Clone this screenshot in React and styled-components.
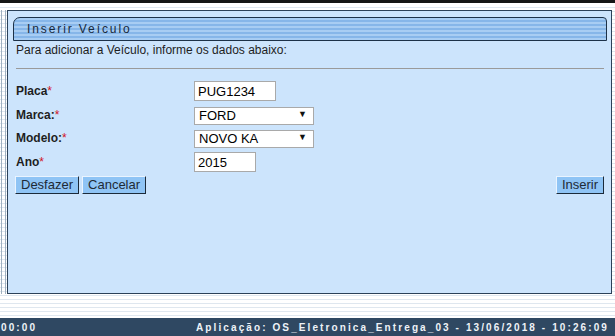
import React from 'react'
import styled, { createGlobalStyle } from 'styled-components'

const GlobalStyle = createGlobalStyle`
  html, body {
    margin: 0;
    padding: 0;
  }
  body {
    font-family: "Liberation Sans", Arial, sans-serif;
    background: #fff;
  }
`;

const Page = styled.div`
  width: 615px;
  height: 336px;
  display: flex;
  flex-direction: column;
  overflow: hidden;
  background: repeating-linear-gradient(
    to bottom,
    #ffffff 0px,
    #ffffff 3px,
    #dfe7ef 3px,
    #dfe7ef 4px
  );
`;

const TopBar = styled.div`
  height: 3px;
  background: #161616;
  border-bottom: 1px solid #ffffff;
`;

const Main = styled.div`
  display: flex;
  padding-top: 6px;
  height: 284px;
`;

const SideRail = styled.div`
  width: 3px;
  margin-left: 1px;
  margin-right: 1px;
  border-left: 1px solid #9fb0c0;
  border-right: 1px solid #9fb0c0;
`;

const Panel = styled.div`
  flex: 0 0 605px;
  box-sizing: border-box;
  height: 284px;
  background: #cce4fc;
  border: 1px solid #2b4158;
  padding: 6px 4px 0 5px;
  display: flex;
  flex-direction: column;
`;

const Header = styled.div`
  height: 22px;
  border: 1px solid #1c3148;
  border-top-left-radius: 7px;
  border-top-right-radius: 4px;
  background: repeating-linear-gradient(
    to bottom,
    #a8cdf3 0px,
    #a8cdf3 2px,
    #86b6e9 2px,
    #86b6e9 4px
  );
  display: flex;
  align-items: center;
  padding-left: 13px;
  font-size: 12px;
  letter-spacing: 1.9px;
  color: #16283c;
`;

const Intro = styled.div`
  margin: 2px 0 0 3px;
  font-size: 12px;
  line-height: 14px;
  color: #1e1e1e;
`;

const Rule = styled.hr`
  margin: 11px 3px 0 3px;
  border: none;
  border-top: 1px solid #9a9a9a;
  height: 0;
`;

const Form = styled.div`
  margin: 12px 0 0 3px;
  display: grid;
  grid-template-columns: 178px 1fr;
  row-gap: 5px;
  align-items: center;
`;

const Label = styled.label`
  font-size: 12px;
  font-weight: bold;
  color: #1e1e1e;
`;

const Req = styled.span`
  color: #d2141e;
  font-weight: normal;
`;

const TextInput = styled.input`
  box-sizing: border-box;
  width: ${p => p.$w}px;
  height: 20px;
  border: 1px solid #a9a9a9;
  background: #fff;
  padding: 0 3px;
  font-family: "Liberation Sans", Arial, sans-serif;
  font-size: 13px;
  color: #000;
  outline: none;
`;

const SelectWrap = styled.div`
  position: relative;
  width: 120px;
  height: 18px;
  &::after {
    content: '▼';
    position: absolute;
    right: 7px;
    top: 3px;
    font-size: 9px;
    color: #111;
    pointer-events: none;
  }
`;

const Select = styled.select`
  appearance: none;
  box-sizing: border-box;
  width: 100%;
  height: 18px;
  border: 1px solid #a9a9a9;
  border-radius: 0;
  background: #fff;
  padding: 0 0 0 4px;
  font-family: "Liberation Sans", Arial, sans-serif;
  font-size: 13px;
  color: #000;
  outline: none;
`;

const Actions = styled.div`
  margin: 4px 3px 0 2px;
  display: flex;
  gap: 3px;
`;

const Button = styled.button`
  box-sizing: border-box;
  height: 18px;
  padding: 0 5px;
  background: #8fc4f5;
  border: 1px solid;
  border-color: #eaf4ff #1b2a3a #1b2a3a #eaf4ff;
  font-family: "Liberation Sans", Arial, sans-serif;
  font-size: 13px;
  line-height: 14px;
  color: #1e2a36;
  margin-left: ${p => (p.$push ? 'auto' : '0')};
`;

const Footer = styled.div`
  margin-top: auto;
  height: 18px;
  background: #2f4862;
  display: flex;
  align-items: center;
  justify-content: space-between;
  padding: 0 6px 0 1px;
  font-size: 10px;
  font-weight: bold;
  letter-spacing: 2.1px;
  color: #eef3f8;
`;

export default function App() {
  return (
    <>
      <GlobalStyle />
      <Page>
        <TopBar />
        <Main>
          <SideRail />
          <Panel>
            <Header>Inserir Veículo</Header>
            <Intro>Para adicionar a Veículo, informe os dados abaixo:</Intro>
            <Rule />
            <Form>
              <Label>Placa<Req>*</Req></Label>
              <TextInput $w={82} defaultValue="PUG1234" />
              <Label>Marca:<Req>*</Req></Label>
              <SelectWrap>
                <Select defaultValue="FORD">
                  <option>FORD</option>
                </Select>
              </SelectWrap>
              <Label>Modelo:<Req>*</Req></Label>
              <SelectWrap>
                <Select defaultValue="NOVO KA">
                  <option>NOVO KA</option>
                </Select>
              </SelectWrap>
              <Label>Ano<Req>*</Req></Label>
              <TextInput $w={62} defaultValue="2015" />
            </Form>
            <Actions>
              <Button>Desfazer</Button>
              <Button>Cancelar</Button>
              <Button $push>Inserir</Button>
            </Actions>
          </Panel>
        </Main>
        <Footer>
          <span>00:00</span>
          <span>Aplicação: OS_Eletronica_Entrega_03 - 13/06/2018 - 10:26:09</span>
        </Footer>
      </Page>
    </>
  )
}
